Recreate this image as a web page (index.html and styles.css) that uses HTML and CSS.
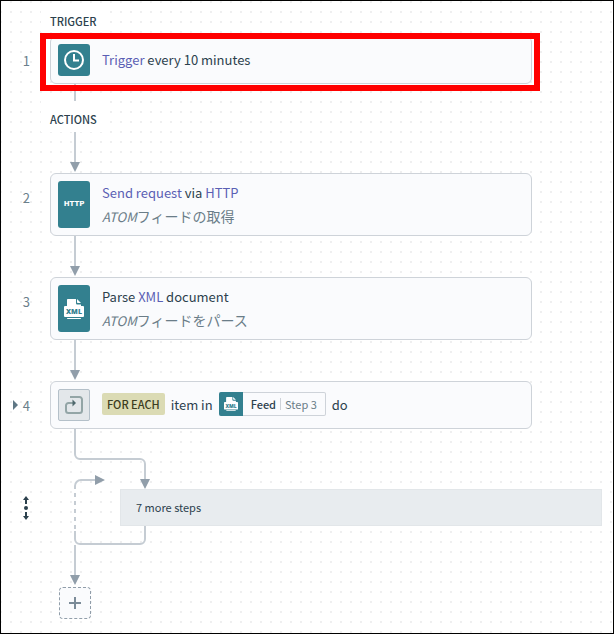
FILE: index.html
```html
<!doctype html>
<html lang="ja">
<head>
    <meta charset="utf-8">
    <meta name="viewport" content="width=device-width, initial-scale=1">
    <title>Recipe steps</title>
    <link rel="stylesheet" href="styles.css">
</head>
<body>
    <main class="recipe">
        <h2 class="label">TRIGGER</h2>

        <section class="step">
            <span class="step-number">1</span>
            <div class="card">
                <div class="app-icon">
                    <svg width="22" height="22" viewBox="0 0 22 22" fill="none" stroke="#fff" stroke-width="2">
                        <circle cx="11" cy="11" r="9"/>
                        <path d="M11 5v6.500h5"/>
                    </svg>
                </div>
                <p class="step-title"><span class="name">Trigger</span> every 10 minutes</p>
            </div>
            <div class="highlight"></div>
        </section>

        <div class="connector connector-short"></div>
        <h2 class="label label-actions">ACTIONS</h2>
        <div class="connector connector-arrow"></div>

        <section class="step">
            <span class="step-number">2</span>
            <div class="card">
                <div class="app-icon"><span class="http">HTTP</span></div>
                <div>
                    <p class="step-title"><span class="name">Send request</span> via <span class="name">HTTP</span></p>
                    <p class="step-note"><em>ATOM</em>フィードの取得</p>
                </div>
            </div>
        </section>

        <div class="connector connector-arrow"></div>

        <section class="step">
            <span class="step-number">3</span>
            <div class="card">
                <div class="app-icon">
                    <svg width="20" height="20" viewBox="0 0 20 20" fill="#fff">
                        <path d="M4 0h8v4c0 1 .5 1.500 1.500 1.500H17V7H3V1c0-.6.4-1 1-1z"/>
                        <path d="M13 0l4 4h-3c-.6 0-1-.4-1-1z"/>
                        <rect y="7" width="20" height="11" rx="1"/>
                        <path d="M3 19h14c0 .6-.4 1-1 1H4c-.6 0-1-.4-1-1z"/>
                        <text class="xml-text" x="10" y="15" text-anchor="middle">XML</text>
                    </svg>
                </div>
                <div>
                    <p class="step-title">Parse <span class="name">XML</span> document</p>
                    <p class="step-note"><em>ATOM</em>フィードをパース</p>
                </div>
            </div>
        </section>

        <div class="connector connector-arrow"></div>

        <section class="step">
            <span class="step-number">
                <button class="expand" type="button" aria-label="Expand step 4">
                    <svg width="5" height="10" viewBox="0 0 5 10"><path fill="#5f7785" d="M0 0l5 5-5 5z"/></svg>
                </button>
                4
            </span>
            <div class="card">
                <div class="app-icon app-icon-loop">
                    <svg width="18" height="18" viewBox="0 0 18 18" fill="none" stroke="#93a5a6" stroke-width="2">
                        <path d="M5 1h9.500A2.500 2.500 0 0 1 17 3.500v11a2.500 2.500 0 0 1-2.500 2.500h-11A2.500 2.500 0 0 1 1 14.500v-5A2.500 2.500 0 0 1 3.500 7H9"/>
                        <path fill="#4f686d" stroke="none" d="M7.500 3.500 11 7l-3.500 3.500z"/>
                    </svg>
                </div>
                <div class="loop-title">
                    <span class="keyword">FOR EACH</span>
                    <span>item in</span>
                    <span class="pill">
                        <span class="pill-icon">
                            <svg width="14" height="14" viewBox="0 0 20 20" fill="#fff">
                                <path d="M4 0h8v4c0 1 .5 1.500 1.500 1.500H17V7H3V1c0-.6.4-1 1-1z"/>
                                <path d="M13 0l4 4h-3c-.6 0-1-.4-1-1z"/>
                                <rect y="7" width="20" height="11" rx="1"/>
                                <path d="M3 19h14c0 .6-.4 1-1 1H4c-.6 0-1-.4-1-1z"/>
                                <text class="xml-text" x="10" y="15" text-anchor="middle">XML</text>
                            </svg>
                        </span>
                        <b class="pill-name">Feed</b>
                        <span class="pill-step">Step 3</span>
                    </span>
                    <span>do</span>
                </div>
            </div>
        </section>

        <section class="loop">
            <svg class="loop-lines" width="110" height="158" viewBox="0 0 110 158" fill="none" stroke="#c5ccd3" stroke-width="2">
                <path d="M25 0v25a5 5 0 0 0 5 5h60a5 5 0 0 1 5 5v16"/>
                <path d="M45 51H31a6 6 0 0 0-6 6v3"/>
                <path stroke-dasharray="4 4" d="M25 64v38"/>
                <path d="M25 102v8a5 5 0 0 0 5 5h60a5 5 0 0 0 5-5V97"/>
                <path d="M25 116v32"/>
                <path fill="#919eaa" stroke="none" d="M90 50h10l-5 10zM45 46l10 5-10 5zM20 146h10l-5 10z"/>
            </svg>
            <svg class="move" width="6" height="24" viewBox="0 0 6 24" fill="#2c414d">
                <path d="M3 0l3 4H4v4H2V4H0zM3 24l3-4H4v-4H2v4H0z"/>
                <circle cx="3" cy="12" r="2"/>
            </svg>
            <div class="more">7 more steps</div>
        </section>

        <button class="add" type="button" aria-label="Add step">
            <svg width="12" height="12" viewBox="0 0 12 12" stroke="#7b8b98" stroke-width="2"><path d="M6 0v12M0 6h12"/></svg>
        </button>
    </main>
</body>
</html>
```
FILE: styles.css
```css
* {
    box-sizing: border-box;
}
body {
    margin: 0;
    min-height: 100vh;
    border: 1px solid #000;
    /* 2px dots, one every 10px */
    background: conic-gradient(from 270deg at 2px 2px, #efeff0 90deg, transparent 0) 10px 11px / 10px 10px #fff;
    color: #2c414d;
    font-family: "Noto Sans CJK JP", "Noto Sans", sans-serif;
    font-size: 13px;
    line-height: 23px;
}
h2, p {
    margin: 0;
}
button {
    padding: 0;
    border: 0;
    background: none;
    cursor: pointer;
}
svg {
    display: block;
}
.recipe {
    padding: 9px 11px 14px 0;
}
.label {
    width: 67px;
    margin-left: 40px;
    padding-left: 9px;
    background-color: #fff;
    font-size: 11px;
    font-weight: 500;
    line-height: 22px;
}
.label-actions {
    padding-top: 7px;
    padding-bottom: 2px;
}
.step {
    display: grid;
    grid-template-columns: 49px 1fr;
    align-items: start;
    position: relative;
    padding-right: 70px;
}
.label + .step {
    margin-top: 4px;
}
.step-number {
    display: flex;
    justify-content: flex-end;
    align-items: center;
    gap: 5px;
    height: 48px;
    padding-right: 20px;
    color: #6b7f8b;
}
.card {
    display: flex;
    gap: 12px;
    padding: 7px;
    border: 1px solid #ced3d9;
    border-radius: 6px;
    background-color: #fafbfd;
}
.app-icon {
    display: flex;
    flex-shrink: 0;
    justify-content: center;
    align-items: center;
    width: 32px;
    min-height: 32px;
    border-radius: 3px;
    background-color: #33808f;
    color: #fff;
}
.app-icon-loop {
    border: 1px solid #b4c0c9;
    border-radius: 2px;
    background-color: #e3e7ea;
}
.app-icon + .step-title {
    line-height: 32px;
}
.http {
    font-family: "DejaVu Sans", sans-serif;
    font-size: 7px;
    font-weight: bold;
}
.xml-text {
    fill: #33808f;
    font-family: "Open Sans", sans-serif;
    font-size: 7px;
    font-weight: 800;
}
.name {
    color: #5a5fb4;
}
.step-note {
    color: #6a7d88;
    font-size: 14px;
    line-height: 24px;
}
.step-note em {
    font-size: 13px;
    line-height: 1;
}
.highlight {
    position: absolute;
    z-index: 1;
    top: -3px;
    right: 62px;
    bottom: -7px;
    left: 39px;
    border: 6px solid #f00;
}
.connector {
    position: relative;
    width: 10px;
    height: 41px;
    margin-left: 69px;
    background: linear-gradient(#c5ccd3, #c5ccd3) center top / 2px 100% no-repeat;
}
.connector-short {
    height: 17px;
}
.connector-arrow {
    background-size: 2px 32px;
}
.connector-arrow::after {
    content: "";
    position: absolute;
    bottom: 1px;
    left: 0;
    border: 5px solid transparent;
    border-top: 10px solid #919eaa;
    border-bottom: 0;
}
.loop-title {
    display: flex;
    align-items: center;
    gap: 6px;
    height: 30px;
}
.keyword {
    padding: 0 5px;
    border-radius: 2px;
    background-color: #dbdbb4;
    color: #3c3c20;
    font-size: 11px;
    font-weight: 500;
    line-height: 22px;
}
.pill {
    display: flex;
    align-items: center;
    height: 24px;
    padding-right: 8px;
    border: 1px solid #ced3d9;
    border-left: 0;
    border-radius: 2px;
    font-size: 11px;
    line-height: 12px;
}
.pill-icon {
    display: flex;
    justify-content: center;
    align-items: center;
    width: 24px;
    height: 24px;
    margin-right: 8px;
    border-radius: 2px 0 0 2px;
    background-color: #33808f;
}
.pill-name {
    margin-right: 4px;
    padding-right: 4px;
    border-right: 1px solid #ced3d9;
    font-weight: 500;
}
.pill-step {
    color: #6a7d88;
}
.loop {
    display: grid;
    grid-template-columns: 49px 70px 1fr;
    grid-template-rows: 60px auto 61px;
}
.loop-lines {
    grid-area: 1 / 2 / 4 / 4;
}
.move {
    grid-area: 2 / 1;
    align-self: center;
    margin-left: 22px;
}
.more {
    grid-area: 2 / 3;
    padding: 6px 15px;
    border: 1px solid #e2e6e9;
    background-color: rgba(231, 235, 238, 0.95);
    font-size: 11px;
}
.add {
    display: flex;
    justify-content: center;
    align-items: center;
    width: 32px;
    height: 32px;
    margin-left: 58px;
    border: 1px dashed #919eaa;
    border-radius: 4px;
    background-color: #fafbfd;
}
```
